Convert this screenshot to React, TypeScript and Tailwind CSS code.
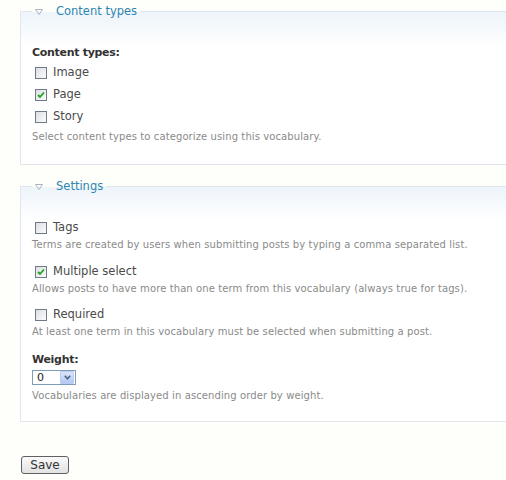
import React from "react";

const font = { fontFamily: '"DejaVu Sans", Verdana, sans-serif' };

function Check({ checked }: { checked?: boolean }) {
  return (
    <span className="ml-[3px] mr-[6px] inline-flex h-[12px] w-[12px] shrink-0 items-center justify-center border border-[#6f7a86] bg-gradient-to-br from-[#dcdfe3] to-[#fbfbfb]">
      {checked && (
        <svg width="8" height="8" viewBox="0 0 8 8">
          <path d="M1 4 L3 6 L7 1.5" fill="none" stroke="#21a121" strokeWidth="1.8" />
        </svg>
      )}
    </span>
  );
}

function Row({ label, checked, h = "h-[22px]" }: { label: string; checked?: boolean; h?: string }) {
  return (
    <div className={`flex items-center ${h} text-[11.5px] text-[#4a4a4a]`}>
      <Check checked={checked} />
      <span>{label}</span>
    </div>
  );
}

function Desc({ children }: { children: React.ReactNode }) {
  return (
    <div className="flex h-[12px] items-center whitespace-nowrap text-[10px] tracking-[0.1px] text-[#8a8a8a]">
      {children}
    </div>
  );
}

function Legend({ title }: { title: string }) {
  return (
    <legend className="flex h-[16px] items-center px-[3px] pt-[1px] text-[11.5px] text-[#2d85b3]">
      <svg width="8" height="6" viewBox="0 0 8 6" className="mr-[13px]">
        <path d="M0.5 0.5 H7.5 L4 5.5 Z" fill="none" stroke="#a9b4c0" strokeWidth="1" />
      </svg>
      <span>{title}</span>
    </legend>
  );
}

export default function App() {
  return (
    <div className="h-[480px] w-[506px] overflow-hidden bg-[#fefefa] pt-[3px]" style={font}>
      <fieldset className="ml-[20px] w-[520px] border border-[#dfe6ec] bg-[linear-gradient(to_bottom,#edf4fa_0px,#ffffff_34px)] pb-[22px] pl-[11px]">
        <Legend title="Content types" />
        <div className="mt-[26px] flex h-[16px] items-center text-[11px] font-bold tracking-[-0.3px] text-[#333]">
          Content types:
        </div>
        <div className="mt-[1px]">
          <Row label="Image" />
          <Row label="Page" checked />
          <Row label="Story" />
        </div>
        <div className="mt-[2px]">
          <Desc>Select content types to categorize using this vocabulary.</Desc>
        </div>
      </fieldset>

      <fieldset className="ml-[20px] mt-[13px] w-[520px] border border-[#dfe6ec] bg-[linear-gradient(to_bottom,#edf4fa_0px,#ffffff_34px)] pb-[20px] pl-[11px]">
        <Legend title="Settings" />
        <div className="mt-[24px]">
          <Row label="Tags" h="h-[20px]" />
          <Desc>Terms are created by users when submitting posts by typing a comma separated list.</Desc>
        </div>
        <div className="mt-[12px]">
          <Row label="Multiple select" checked h="h-[20px]" />
          <Desc>Allows posts to have more than one term from this vocabulary (always true for tags).</Desc>
        </div>
        <div className="mt-[11px]">
          <Row label="Required" h="h-[20px]" />
          <Desc>At least one term in this vocabulary must be selected when submitting a post.</Desc>
        </div>
        <div className="mt-[15px] flex h-[16px] items-center text-[11px] font-bold tracking-[-0.3px] text-[#333]">
          Weight:
        </div>
        <div className="mt-[2px] flex h-[15px] w-[44px] items-center border border-[#7f9db9] bg-white">
          <span className="flex-1 pl-[4px] text-[11px] leading-none text-[#222]">0</span>
          <span className="mr-[1px] flex h-[13px] w-[14px] items-center justify-center rounded-[1px] border border-[#b8cbf2] bg-gradient-to-b from-[#dbe6fb] to-[#b3c8f5]">
            <svg width="7" height="5" viewBox="0 0 7 5">
              <path d="M0.8 0.8 L3.5 3.8 L6.2 0.8" fill="none" stroke="#4d6185" strokeWidth="1.6" />
            </svg>
          </span>
        </div>
        <div className="mt-[4px]">
          <Desc>Vocabularies are displayed in ascending order by weight.</Desc>
        </div>
      </fieldset>

      <button className="ml-[21px] mt-[34px] flex h-[18px] w-[48px] items-center justify-center rounded-[3px] border border-[#606060] bg-gradient-to-b from-[#fafafa] to-[#e2e2e2] text-[12px] text-[#333]">
        Save
      </button>
    </div>
  );
}
